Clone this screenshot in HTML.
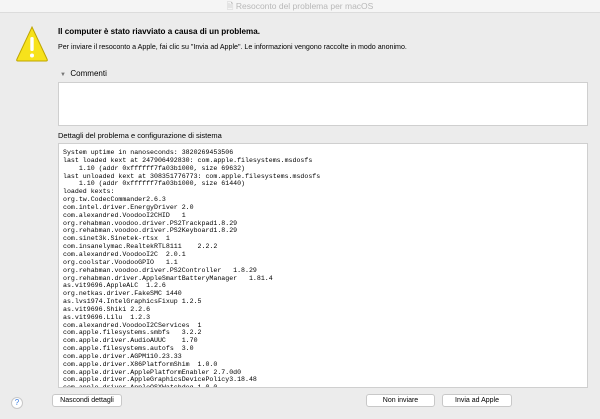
<!DOCTYPE html>
<html><head><meta charset="utf-8"><style>
*{margin:0;padding:0;box-sizing:border-box}
body{width:600px;height:419px;background:#ececec;font-family:"Liberation Sans",sans-serif;position:relative;overflow:hidden;color:#000}
.tb{position:absolute;left:0;top:0;width:600px;height:13px;background:#f5f5f5;border-bottom:1px solid #dcdcdc;text-align:center;font-size:8.5px;color:#b8b8b8;line-height:13px}
.a{position:absolute}
.h{left:58px;top:27px;font-size:8.1px;font-weight:bold}
.s{left:58px;top:43px;font-size:7.1px}
.box{position:absolute;left:58px;width:530px;background:#fff;border:1px solid #cfcfcf}
pre{font-family:"Liberation Mono",monospace;font-size:6.6px;line-height:7.85px;padding:5px 0 0 4px;color:#000}
.btn{position:absolute;top:394px;height:13px;background:#fff;border:1px solid #c8c8c8;border-radius:3px;font-size:7px;text-align:center;line-height:11px}
</style></head><body>
<div class="tb">&#128462; Resoconto del problema per macOS</div>
<svg class="a" style="left:14px;top:18px" width="36" height="46" viewBox="0 0 36 46">
<path d="M18 9 L33 41 Q34 43 32 43 L4 43 Q2 43 3 41 Z" fill="#f7e21b" stroke="#bfa600" stroke-width="1"/>
<rect x="16.3" y="19" width="3.4" height="14" rx="1.5" fill="#fff"/><circle cx="18" cy="37.5" r="2" fill="#fff"/></svg>
<div class="a h">Il computer è stato riavviato a causa di un problema.</div>
<div class="a s">Per inviare il resoconto a Apple, fai clic su "Invia ad Apple". Le informazioni vengono raccolte in modo anonimo.</div>
<div class="a" style="left:60px;top:69px;font-size:8px"><span style="color:#777;font-size:6px">▼</span>&nbsp; Commenti</div>
<div class="box" style="top:82px;height:44px"></div>
<div class="a" style="left:58px;top:131px;font-size:7.5px">Dettagli del problema e configurazione di sistema</div>
<div class="box" style="top:143px;height:245px;overflow:hidden"><pre>System uptime in nanoseconds: 3820269453506
last loaded kext at 247906492830: com.apple.filesystems.msdosfs
    1.10 (addr 0xffffff7fa03b1000, size 69632)
last unloaded kext at 308351776773: com.apple.filesystems.msdosfs
    1.10 (addr 0xffffff7fa03b1000, size 61440)
loaded kexts:
org.tw.CodecCommander2.6.3
com.intel.driver.EnergyDriver 2.0
com.alexandred.VoodooI2CHID   1
org.rehabman.voodoo.driver.PS2Trackpad1.8.29
org.rehabman.voodoo.driver.PS2Keyboard1.8.29
com.sinet3k.Sinetek-rtsx  1
com.insanelymac.RealtekRTL8111    2.2.2
com.alexandred.VoodooI2C  2.0.1
org.coolstar.VoodooGPIO   1.1
org.rehabman.voodoo.driver.PS2Controller   1.8.29
org.rehabman.driver.AppleSmartBatteryManager   1.81.4
as.vit9696.AppleALC  1.2.6
org.netkas.driver.FakeSMC 1440
as.lvs1974.IntelGraphicsFixup 1.2.5
as.vit9696.Shiki 2.2.6
as.vit9696.Lilu  1.2.3
com.alexandred.VoodooI2CServices  1
com.apple.filesystems.smbfs   3.2.2
com.apple.driver.AudioAUUC    1.70
com.apple.filesystems.autofs  3.0
com.apple.driver.AGPM110.23.33
com.apple.driver.X86PlatformShim  1.0.0
com.apple.driver.ApplePlatformEnabler 2.7.0d0
com.apple.driver.AppleGraphicsDevicePolicy3.18.48
com.apple.driver.AppleOSXWatchdog 1.0.0</pre></div>
<div class="a" style="left:11px;top:397px;width:12px;height:12px;border-radius:50%;background:#fff;border:1px solid #c8c8c8;color:#3a7de0;font-size:8px;text-align:center;line-height:10px">?</div>
<div class="btn" style="left:52px;width:70px">Nascondi dettagli</div>
<div class="btn" style="left:366px;width:69px">Non inviare</div>
<div class="btn" style="left:442px;width:70px">Invia ad Apple</div>
</body></html>
